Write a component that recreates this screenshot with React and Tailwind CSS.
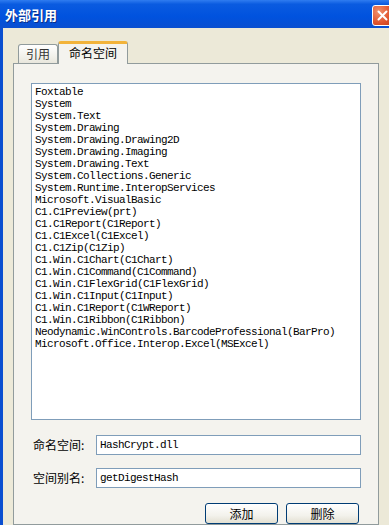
import React from "react";

const items = [
  "Foxtable",
  "System",
  "System.Text",
  "System.Drawing",
  "System.Drawing.Drawing2D",
  "System.Drawing.Imaging",
  "System.Drawing.Text",
  "System.Collections.Generic",
  "System.Runtime.InteropServices",
  "Microsoft.VisualBasic",
  "C1.C1Preview(prt)",
  "C1.C1Report(C1Report)",
  "C1.C1Excel(C1Excel)",
  "C1.C1Zip(C1Zip)",
  "C1.Win.C1Chart(C1Chart)",
  "C1.Win.C1Command(C1Command)",
  "C1.Win.C1FlexGrid(C1FlexGrid)",
  "C1.Win.C1Input(C1Input)",
  "C1.Win.C1Report(C1WReport)",
  "C1.Win.C1Ribbon(C1Ribbon)",
  "Neodynamic.WinControls.BarcodeProfessional(BarPro)",
  "Microsoft.Office.Interop.Excel(MSExcel)",
];

const mono = { fontFamily: '"Liberation Mono", "DejaVu Sans Mono", monospace' };
const cjk = { fontFamily: '"Noto Sans CJK SC", "Noto Sans", sans-serif' };

export default function App() {
  return (
    <div className="w-[389px] h-[525px] overflow-hidden bg-[#ece9d8] flex flex-col">
      {/* Title bar */}
      <div className="h-[28px] shrink-0 flex items-center justify-between pl-[5px] bg-[linear-gradient(to_bottom,#2f7cf0_0%,#0a5be0_15%,#0052de_60%,#0a4fd0_100%)]">
        <span
          className="text-white font-bold text-[13px] leading-none [text-shadow:1px_1px_0_#0a2f8a]"
          style={cjk}
        >
          外部引用
        </span>
        <div className="w-[21px] h-[21px] mt-[2px] rounded-[3px] border border-white bg-[radial-gradient(circle_at_30%_30%,#f0926e,#e0532d_60%,#c23d1a)] flex items-center justify-center shrink-0 translate-x-[4px]">
          <svg width="13" height="13" viewBox="0 0 13 13">
            <path d="M2.5 2.5 L10.5 10.5 M10.5 2.5 L2.5 10.5" stroke="white" strokeWidth="2" strokeLinecap="round" />
          </svg>
        </div>
      </div>

      {/* Body */}
      <div className="flex-1 flex flex-col border-l-[3px] border-[#0a4fd0] pl-[10px] pr-[10px]">
        {/* Tabs */}
        <div className="mt-[13px] h-[23px] flex items-end pl-[5px] relative z-10">
          <div
            className="w-[40px] h-[19px] mb-[1px] border border-b-0 border-[#919b9c] rounded-t-[3px] bg-[linear-gradient(to_bottom,#ffffff,#f0efe8_70%,#e8e6dc)] text-[12px] text-[#333] flex items-center justify-center"
            style={cjk}
          >
            引用
          </div>
          <div
            className="w-[70px] h-[23px] border-x border-[#919b9c] rounded-t-[3px] border-t-[3px] border-t-[#f2b33a] bg-[#f4f3ee] text-[12px] text-black flex items-center justify-center pb-[2px]"
            style={cjk}
          >
            命名空间
          </div>
        </div>

        {/* Panel */}
        <div className="flex-1 border border-[#919b9c] bg-[#f4f3ee] -mt-[1px] pl-[17px] pt-[19px] flex flex-col">
          <div className="w-[330px] h-[337px] bg-white border border-[#7f9db9] pl-[3px] pt-[2px]">
            {items.map((t) => (
              <div
                key={t}
                className="h-[12px] leading-[12px] text-[11px] tracking-[-0.6px] text-black whitespace-nowrap"
                style={mono}
              >
                {t}
              </div>
            ))}
          </div>

          <div className="mt-[15px] w-[330px] flex flex-col gap-[13px]">
            <div className="flex items-center h-[20px]">
              <span className="w-[65px] pl-[2px] text-[12px] text-black" style={cjk}>
                命名空间:
              </span>
              <div
                className="w-[265px] h-[20px] bg-white border border-[#7f9db9] pl-[3px] flex items-center text-[11px] tracking-[-0.6px]"
                style={mono}
              >
                HashCrypt.dll
              </div>
            </div>
            <div className="flex items-center h-[20px]">
              <span className="w-[65px] pl-[2px] text-[12px] text-black" style={cjk}>
                空间别名:
              </span>
              <div
                className="w-[265px] h-[20px] bg-white border border-[#7f9db9] pl-[3px] flex items-center text-[11px] tracking-[-0.6px]"
                style={mono}
              >
                getDigestHash
              </div>
            </div>
          </div>

          <div className="mt-[15px] w-[328px] flex justify-end gap-[8px]">
            <button
              className="w-[73px] h-[21px] rounded-[3px] border border-[#003c74] bg-[linear-gradient(to_bottom,#ffffff,#f3f2ec_60%,#e3e0d2)] text-[12px] text-black flex items-center justify-center"
              style={cjk}
            >
              添加
            </button>
            <button
              className="w-[73px] h-[21px] rounded-[3px] border border-[#003c74] bg-[linear-gradient(to_bottom,#ffffff,#f3f2ec_60%,#e3e0d2)] text-[12px] text-black flex items-center justify-center"
              style={cjk}
            >
              删除
            </button>
          </div>
        </div>
      </div>
    </div>
  );
}
